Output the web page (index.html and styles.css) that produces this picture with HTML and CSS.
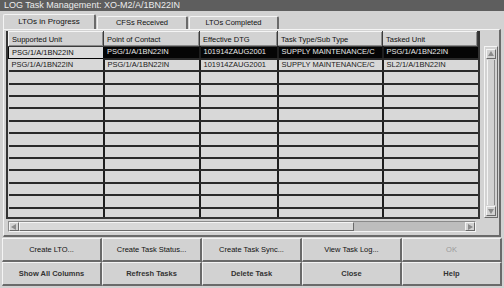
FILE: index.html
```html
<!DOCTYPE html>
<html lang="en">
<head>
    <meta charset="UTF-8">
    <title>LOG Task Management</title>
    <link rel="stylesheet" href="styles.css">
</head>
<body>
    <div class="window">
        <div class="titlebar">LOG Task Management: XO-M2/A/1BN22IN</div>

        <div class="tabs">
            <div class="tab active">LTOs in Progress</div>
            <div class="tab">CFSs Received</div>
            <div class="tab">LTOs Completed</div>
        </div>

        <div class="panel">
            <div class="grid-area">
                <div class="table-wrap">
                    <table class="tasks">
                        <thead>
                            <tr>
                                <th class="c1">Supported Unit</th>
                                <th class="c2">Point of Contact</th>
                                <th class="c3">Effective DTG</th>
                                <th class="c4">Task Type/Sub Type</th>
                                <th class="c5">Tasked Unit</th>
                            </tr>
                        </thead>
                        <tbody id="rows"></tbody>
                    </table>
                </div>
                <div class="vscroll">
                    <div class="vframe">
                        <div class="arrow up"></div>
                        <div class="trough"></div>
                        <div class="arrow down"></div>
                    </div>
                </div>
            </div>
            <div class="hscroll">
                <div class="arrow left"></div>
                <div class="thumb"></div>
                <div class="htrough"></div>
                <div class="arrow right"></div>
            </div>
        </div>

        <div class="buttons">
            <button>Create LTO...</button>
            <button>Create Task Status...</button>
            <button>Create Task Sync...</button>
            <button>View Task Log...</button>
            <button class="disabled">OK</button>
            <button class="bold">Show All Columns</button>
            <button class="bold">Refresh Tasks</button>
            <button class="bold">Delete Task</button>
            <button class="bold">Close</button>
            <button class="bold">Help</button>
        </div>
    </div>

    <script>
        // task rows shown in the list, rest are blank filler rows
        const tasks = [
            ['PSG/1/A/1BN22IN', 'PSG/1/A/1BN22IN', '101914ZAUG2001', 'SUPPLY MAINTENANCE/C', 'PSG/1/A/1BN22IN'],
            ['PSG/1/A/1BN22IN', 'PSG/1/A/1BN22IN', '101914ZAUG2001', 'SUPPLY MAINTENANCE/C', 'SL2/1/A/1BN22IN']
        ];
        const totalRows = 16;

        const body = document.getElementById('rows');
        for (let i = 0; i < totalRows; i++) {
            const tr = document.createElement('tr');
            if (i === 0) tr.className = 'selected';
            const data = tasks[i] || ['', '', '', '', ''];
            data.forEach((text, j) => {
                const td = document.createElement('td');
                td.textContent = text;
                if (i === 0 && j === 0) td.className = 'focus';
                tr.appendChild(td);
            });
            body.appendChild(tr);
        }
    </script>
</body>
</html>
```

FILE: styles.css
```css
* {
    box-sizing: border-box;
}

html, body {
    margin: 0;
    padding: 0;
}

body {
    font-family: "Liberation Sans", Arial, sans-serif;
    background-color: #d2d2d2;
    color: #111;
}

.window {
    width: 504px;
    height: 288px;
    display: flex;
    flex-direction: column;
    background-color: #d2d2d2;
    overflow: hidden;
}

.titlebar {
    height: 11px;
    flex: none;
    background-color: #5e5e5e;
    color: #ececec;
    font-size: 9px;
    line-height: 11px;
    padding-left: 4px;
    white-space: nowrap;
}

.tabs {
    display: flex;
    align-items: flex-end;
    flex: none;
    height: 18px;
    padding-left: 3px;
}

.tab {
    height: 13px;
    font-size: 7.5px;
    line-height: 12px;
    text-align: center;
    border: 1px solid #f4f4f4;
    border-right: 2px solid #6a6a6a;
    border-bottom: none;
    border-radius: 2px 2px 0 0;
    background-color: #d2d2d2;
}

.tab:nth-child(1) { width: 93px; }
.tab:nth-child(2) { width: 91px; margin-left: 1px; }
.tab:nth-child(3) { width: 90px; margin-left: 1px; }

.tab.active {
    height: 15px;
    line-height: 14px;
    font-size: 8px;
}

.panel {
    flex: 1;
    min-height: 0;
    margin: 0 3px;
    padding: 1px 0 2px 2px;
    border-top: 1px solid #f4f4f4;
    border-left: 1px solid #f4f4f4;
    border-right: 2px solid #6a6a6a;
    border-bottom: 2px solid #6a6a6a;
    display: flex;
    flex-direction: column;
}

.grid-area {
    flex: 1;
    min-height: 0;
    display: flex;
    gap: 4px;
}

.table-wrap {
    width: 474px;
    height: 188px;
    border-left: 2px solid #333;
    border-right: 2px solid #333;
    border-bottom: 2px solid #333;
    overflow: hidden;
    background-color: #d8d8d8;
}

.tasks {
    width: 470px;
    border-collapse: collapse;
    table-layout: fixed;
    font-size: 7.5px;
}

.tasks .c1 { width: 95px; }
.tasks .c2 { width: 96px; }
.tasks .c3 { width: 78px; }
.tasks .c4 { width: 105px; }

.tasks th {
    height: 15px;
    font-weight: normal;
    text-align: left;
    padding: 0 3px;
    background-color: #d2d2d2;
    border: 1px solid #3c3c3c;
    border-top-color: #f4f4f4;
    border-left-color: #f4f4f4;
    box-shadow: inset -1px -1px 0 #8a8a8a;
    white-space: nowrap;
    overflow: hidden;
}

.tasks td {
    height: 12.4px;
    padding: 0 3px;
    background-color: #d8d8d8;
    border-right: 2px solid #1e1e1e;
    border-bottom: 2px solid #2a2a2a;
    white-space: nowrap;
    overflow: hidden;
    line-height: 10px;
    color: #1a1a1a;
}

.tasks td:last-child {
    border-right: none;
}

.tasks tr.selected td {
    background-color: #050505;
    color: #e8e8e8;
}

.tasks tr.selected td.focus {
    background-color: #dcdcdc;
    color: #111;
    border: 1px solid #050505;
}

.vscroll {
    width: 14px;
    padding-top: 15px;
    display: flex;
}

.vframe {
    flex: 1;
    height: 172px;
    display: flex;
    flex-direction: column;
    border: 1px solid #f4f4f4;
    border-right-color: #6a6a6a;
    border-bottom-color: #6a6a6a;
    padding: 2px 0 1px;
}

.vframe .trough {
    flex: 1;
    margin: 1px 2px;
    border-left: 1px solid #f4f4f4;
    border-right: 1px solid #8a8a8a;
}

.arrow {
    flex: none;
    width: 10px;
    height: 10px;
    margin: 0 1px;
    border: 1px solid #f4f4f4;
    border-right-color: #6a6a6a;
    border-bottom-color: #6a6a6a;
    position: relative;
}

.arrow::after {
    content: "";
    position: absolute;
    left: 1px;
    top: 1px;
    width: 0;
    height: 0;
    border-left: 3px solid transparent;
    border-right: 3px solid transparent;
}

.arrow.up::after {
    border-bottom: 5px solid #8a8a8a;
}

.arrow.down::after {
    top: 2px;
    border-top: 5px solid #8a8a8a;
}

.hscroll {
    flex: none;
    width: 468px;
    height: 11px;
    margin: 4px 0 1px 2px;
    display: flex;
    border: 1px solid #8a8a8a;
    border-right-color: #f4f4f4;
    border-bottom-color: #f4f4f4;
}

.hscroll .arrow {
    margin: 0;
    height: 9px;
}

.arrow.left::after {
    left: 1px;
    top: 1px;
    border-left: none;
    border-top: 3px solid transparent;
    border-bottom: 3px solid transparent;
    border-right: 5px solid #8a8a8a;
}

.arrow.right::after {
    left: 2px;
    top: 1px;
    border-right: none;
    border-top: 3px solid transparent;
    border-bottom: 3px solid transparent;
    border-left: 5px solid #8a8a8a;
}

.hscroll .thumb {
    width: 335px;
    background-color: #d8d8d8;
    border: 1px solid #f4f4f4;
    border-right-color: #6a6a6a;
    border-bottom-color: #6a6a6a;
}

.hscroll .htrough {
    flex: 1;
    background-color: #bdbdbd;
}

.buttons {
    flex: none;
    display: grid;
    grid-template-columns: repeat(5, 100px);
    grid-auto-rows: 24px;
    padding: 1px 2px 2px 2px;
}

.buttons button {
    font-family: "Liberation Sans", Arial, sans-serif;
    font-size: 7.5px;
    color: #111;
    background-color: #d2d2d2;
    border: 1px solid #f4f4f4;
    border-right: 2px solid #6a6a6a;
    border-bottom: 2px solid #6a6a6a;
    padding: 0;
}

.buttons button.bold {
    font-weight: bold;
    color: #333;
}

.buttons button.disabled {
    color: #9a9a9a;
}
```
